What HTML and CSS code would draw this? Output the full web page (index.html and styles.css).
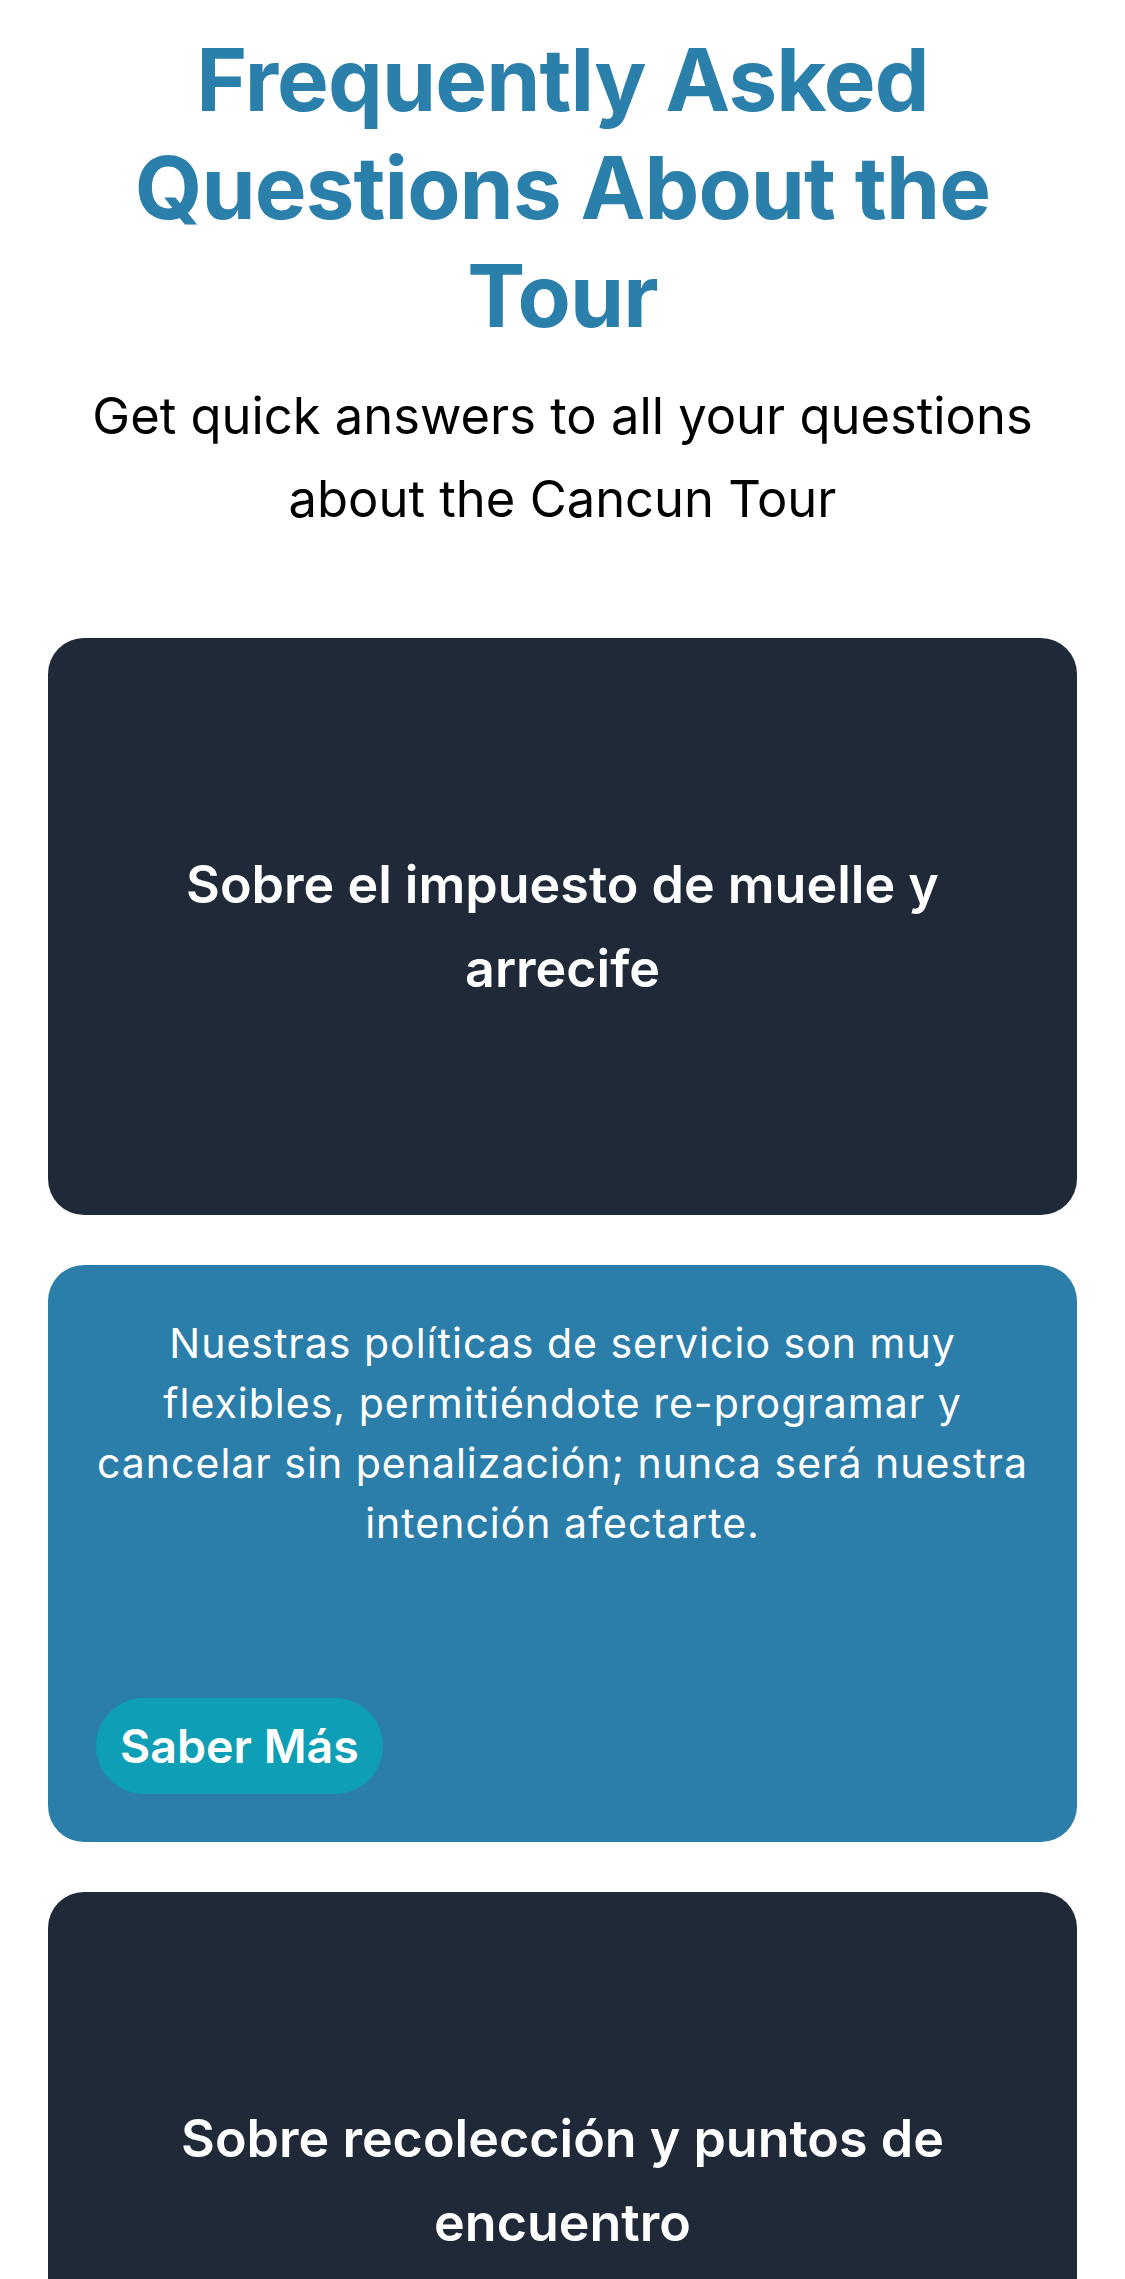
FILE: index.html
```html
<!DOCTYPE html>
<html lang="es">
<head>
<meta charset="utf-8">
<title>FAQ - Cancun Tour</title>
<link rel="stylesheet" href="styles.css">
</head>
<body>
<main class="faq">
  <header class="faq-header">
    <h1 class="faq-title">Frequently Asked Questions About the Tour</h1>
    <p class="faq-subtitle">Get quick answers to all your questions about the Cancun Tour</p>
  </header>
  <section class="faq-list">
    <article class="card card-question">
      <h2 class="card-q">Sobre el impuesto de muelle y arrecife</h2>
    </article>
    <article class="card card-answer">
      <p class="card-a">Nuestras políticas de servicio son muy flexibles, permitiéndote re-programar y cancelar sin penalización; nunca será nuestra intención afectarte.</p>
      <a class="btn-more" href="#">Saber Más</a>
    </article>
    <article class="card card-question">
      <h2 class="card-q">Sobre recolección y puntos de encuentro</h2>
    </article>
  </section>
</main>
</body>
</html>
```
FILE: styles.css
```css
* { box-sizing: border-box; }
html, body { margin: 0; padding: 0; background: #ffffff; }
body {
  font-family: Inter, "Noto Sans", "Liberation Sans", sans-serif;
  color: #000;
}
.faq { padding: 26px 48px 48px; }
.faq-header { text-align: center; }
.faq-title {
  margin: 0 auto;
  max-width: 900px;
  font-size: 87px;
  line-height: 108px;
  font-weight: 700;
  color: #2a7fab;
  letter-spacing: -0.9px;
}
.faq-subtitle {
  margin: 24px auto 0;
  max-width: 980px;
  font-size: 50.7px;
  line-height: 83px;
  font-weight: 400;
  color: #000;
}
.faq-list {
  margin-top: 98px;
  display: flex;
  flex-direction: column;
  gap: 50px;
}
.card {
  height: 577px;
  border-radius: 36px;
  padding: 48px;
  display: flex;
  flex-direction: column;
  color: #fff;
}
.card-question {
  background: #1f2937;
  justify-content: center;
  align-items: center;
  text-align: center;
}
.card-q {
  margin: 0;
  max-width: 820px;
  font-size: 52px;
  line-height: 84px;
  font-weight: 600;
}
.card-answer {
  background: #2b7ea9;
  justify-content: space-between;
  align-items: flex-start;
}
.card-a {
  margin: 0;
  align-self: stretch;
  text-align: center;
  font-size: 41px;
  line-height: 60px;
  font-weight: 400;
  letter-spacing: 1px;
}
.btn-more {
  display: inline-block;
  background: #0e9fb6;
  color: #fff;
  text-decoration: none;
  font-size: 46.5px;
  line-height: 72px;
  font-weight: 600;
  padding: 12px 24px;
  border-radius: 48px;
}
```
